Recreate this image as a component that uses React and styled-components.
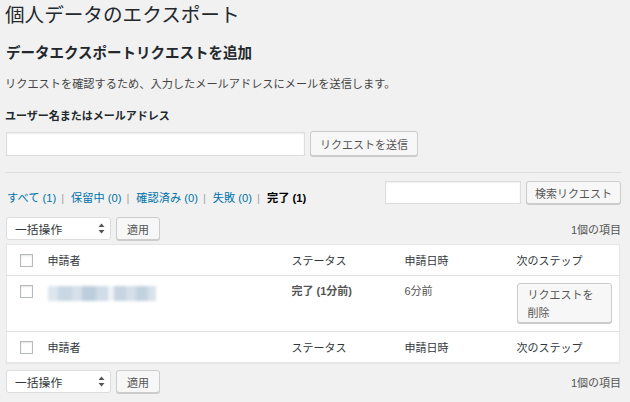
import React from "react";
import styled, { createGlobalStyle } from "styled-components";

const Global = createGlobalStyle`
  html, body { margin: 0; padding: 0; background: #f1f1f1; }
  body {
    font-family: "Liberation Sans", "Noto Sans CJK JP", sans-serif;
    font-size: 11px;
    color: #444;
  }
  * { box-sizing: border-box; }
`;

const Wrap = styled.div`
  padding: 2px 9px 0 6px;
  width: 630px;
  height: 402px;
  overflow: hidden;
`;

const Title = styled.h1`
  margin: 0 0 0 -1px;
  font-size: 19.6px;
  font-weight: 400;
  line-height: 26px;
  color: #23282d;
`;

const SubTitle = styled.h2`
  margin: 15px 0 0;
  font-size: 14.5px;
  font-weight: 700;
  line-height: 20px;
  color: #23282d;
`;

const Desc = styled.p`
  margin: 13px 0 0 -1px;
  line-height: 16px;
  font-size: 11.2px;
  color: #444;
`;

const Label = styled.label`
  display: block;
  margin: 16px 0 0 -1px;
  line-height: 16px;
  font-weight: 700;
  color: #23282d;
`;

const Row = styled.div`
  display: flex;
  align-items: ${(p) => p.$align || "center"};
  gap: ${(p) => p.$gap || "5px"};
  margin-top: ${(p) => p.$mt || "0"};
  height: ${(p) => p.$h || "auto"};
`;

const TextInput = styled.div`
  width: ${(p) => p.$w};
  height: ${(p) => p.$h || "24px"};
  background: #fff;
  border: 1px solid #ddd;
  box-shadow: inset 0 1px 2px rgba(0, 0, 0, 0.07);
`;

const Button = styled.button`
  font-family: inherit;
  font-size: 11px;
  color: #555;
  background: #f7f7f7;
  border: 1px solid #ccc;
  border-radius: 3px;
  box-shadow: 0 1px 0 #ccc;
  height: ${(p) => p.$h || "24px"};
  width: ${(p) => p.$w || "auto"};
  padding: ${(p) => p.$pad || "0 9px"};
  line-height: ${(p) => p.$lh || "normal"};
  text-align: left;
  cursor: pointer;
`;

const Divider = styled.hr`
  margin: 16px 0 0 -1px;
  border: 0;
  border-top: 1px solid #dcdcdc;
  height: 0;
`;

const SubNav = styled.ul`
  list-style: none;
  margin: 9px 0 0 1px;
  padding: 0;
  display: flex;
  line-height: 16px;
  font-size: 11.2px;
`;

const NavItem = styled.li`
  white-space: pre;
`;

const Sep = styled.span`
  color: #a0a5aa;
  margin: 0 7px 0 5px;
`;

const NavLink = styled.a`
  color: ${(p) => (p.$current ? "#000" : "#0073aa")};
  font-weight: ${(p) => (p.$current ? 700 : 400)};
  text-decoration: none;
`;

const Spacer = styled.div`
  flex: 1;
`;

const Select = styled.div`
  width: 105px;
  height: 23px;
  background: #fff;
  border: 1px solid #ddd;
  border-radius: 3px;
  display: flex;
  align-items: center;
  justify-content: space-between;
  padding: 0 5px 0 8px;
  color: #32373c;
  font-size: 11.8px;
`;

const Count = styled.span`
  color: #555;
  font-size: 11px;
`;

const Table = styled.table`
  margin-top: 4px;
  width: 614px;
  table-layout: fixed;
  border-collapse: collapse;
  background: #fff;
  border: 1px solid #e5e5e5;
  box-shadow: 0 1px 1px rgba(0, 0, 0, 0.04);
`;

const Th = styled.th`
  text-align: left;
  font-weight: 400;
  color: #32373c;
  height: 31px;
  padding: 0 7px;
  vertical-align: middle;
  border-${(p) => p.$side}: 1px solid #e1e1e1;
`;

const Td = styled.td`
  vertical-align: top;
  height: 56px;
  padding: ${(p) => p.$pad || "7px 7px 0"};
  color: #555;
  font-weight: ${(p) => (p.$bold ? 700 : 400)};
  line-height: 16px;
`;

const CheckCell = styled.td`
  vertical-align: top;
  padding: 9px 0 0 13px;
`;

const CheckHead = styled.th`
  vertical-align: middle;
  padding: 0 0 0 13px;
  border-${(p) => p.$side}: 1px solid #e1e1e1;
`;

const Checkbox = styled.span`
  display: block;
  width: 13px;
  height: 13px;
  background: #fff;
  border: 1px solid #b4b9be;
  box-shadow: inset 0 1px 2px rgba(0, 0, 0, 0.1);
`;

const Blur = styled.div`
  display: flex;
  margin-top: 3px;
  height: 15px;
  filter: blur(1.6px);
`;

const BlurBlock = styled.span`
  display: block;
  height: 100%;
  width: ${(p) => p.$w}px;
  background: ${(p) => p.$c};
`;

const Arrows = () => (
  <svg width="7" height="11" viewBox="0 0 7 11">
    <path d="M3.5 0.5 L6.5 4 L0.5 4 Z" fill="#555" />
    <path d="M3.5 10.5 L6.5 7 L0.5 7 Z" fill="#555" />
  </svg>
);

const BulkRow = ({ mt }) => (
  <Row $mt={mt}>
    <Select>
      <span>一括操作</span>
      <Arrows />
    </Select>
    <Button $h="23px" $pad="0 10px">適用</Button>
    <Spacer />
    <Count>1個の項目</Count>
  </Row>
);

const nav = [
  ["すべて", "1"],
  ["保留中", "0"],
  ["確認済み", "0"],
  ["失敗", "0"],
  ["完了", "1", true],
];

const blurBlocks = [
  [10, "#dde6ee"], [14, "#c9d7e3"], [10, "#d6e0ea"], [14, "#bccddc"], [12, "#d0dce7"],
  [6, "#eef2f6"], [12, "#c6d5e1"], [10, "#d4dfe9"], [12, "#c2d2df"], [8, "#d8e2eb"],
];

const HeadRow = ({ side }) => (
  <tr>
    <CheckHead $side={side}><Checkbox /></CheckHead>
    <Th $side={side}>申請者</Th>
    <Th $side={side}>ステータス</Th>
    <Th $side={side}>申請日時</Th>
    <Th $side={side}>次のステップ</Th>
  </tr>
);

export default function App() {
  return (
    <>
      <Global />
      <Wrap>
        <Title>個人データのエクスポート</Title>
        <SubTitle>データエクスポートリクエストを追加</SubTitle>
        <Desc>リクエストを確認するため、入力したメールアドレスにメールを送信します。</Desc>
        <Label>ユーザー名またはメールアドレス</Label>
        <Row $mt="7px" $h="25px">
          <TextInput $w="299px" />
          <Button $h="25px" $pad="0 9px">リクエストを送信</Button>
        </Row>
        <Divider />
        <Row $mt="8px" $align="flex-start">
          <SubNav>
            {nav.map(([label, n, cur], i) => (
              <NavItem key={label}>
                <NavLink href="#" $current={cur}>
                  {label} ({n})
                </NavLink>
                {i < nav.length - 1 && <Sep>|</Sep>}
              </NavItem>
            ))}
          </SubNav>
          <Spacer />
          <TextInput $w="136px" $h="23px" />
          <Button $h="23px" $pad="0 8px">検索リクエスト</Button>
        </Row>
        <BulkRow mt="11px" />
        <Table>
          <colgroup>
            <col style={{ width: "34px" }} />
            <col style={{ width: "244px" }} />
            <col style={{ width: "113px" }} />
            <col style={{ width: "112px" }} />
            <col />
          </colgroup>
          <thead>
            <HeadRow side="bottom" />
          </thead>
          <tbody>
            <tr>
              <CheckCell><Checkbox /></CheckCell>
              <Td>
                <Blur>
                  {blurBlocks.map(([w, c], i) => (
                    <BlurBlock key={i} $w={w} $c={c} />
                  ))}
                </Blur>
              </Td>
              <Td $bold>完了 (1分前)</Td>
              <Td>6分前</Td>
              <Td>
                <Button $w="95px" $h="40px" $pad="2px 10px" $lh="18px">
                  リクエストを削除
                </Button>
              </Td>
            </tr>
          </tbody>
          <tfoot>
            <HeadRow side="top" />
          </tfoot>
        </Table>
        <BulkRow mt="7px" />
      </Wrap>
    </>
  );
}
